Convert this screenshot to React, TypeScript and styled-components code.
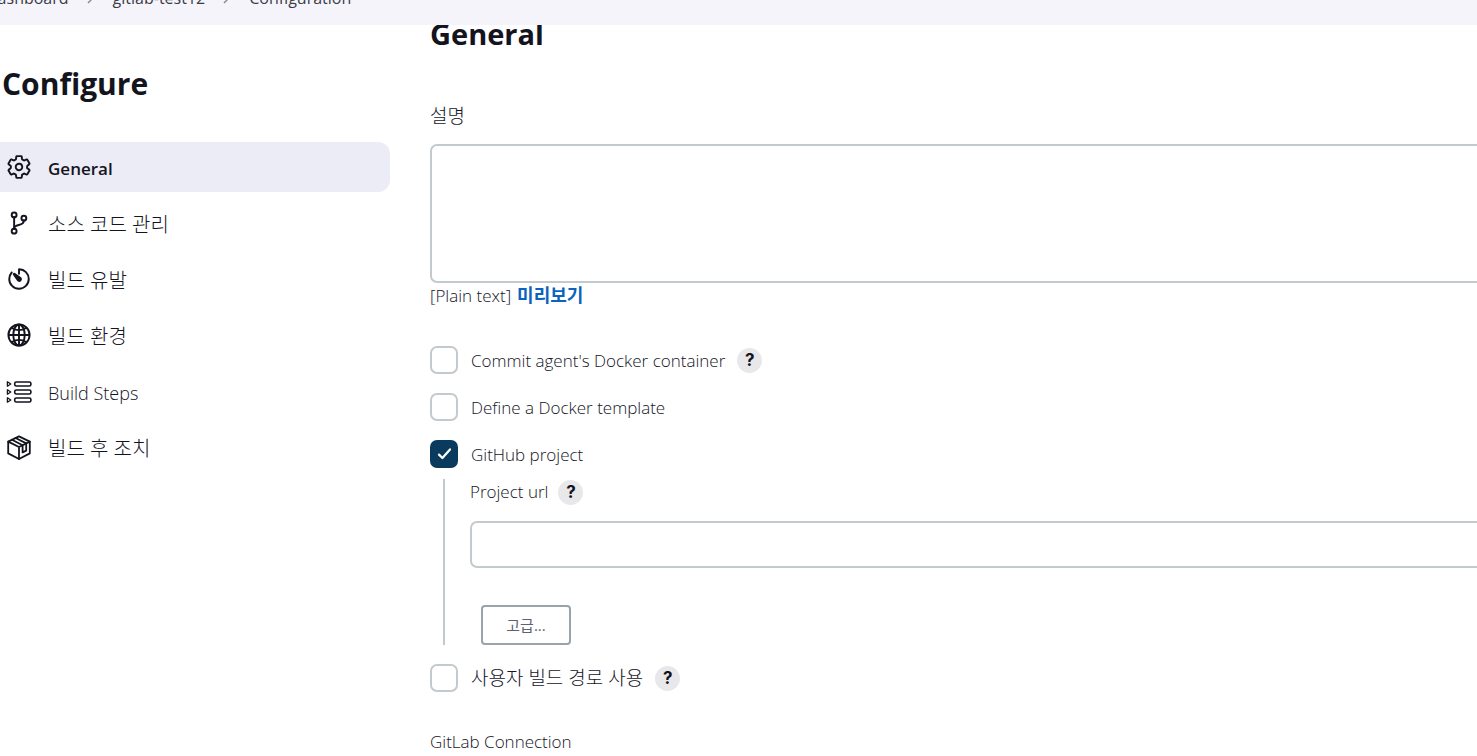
import React, { useState } from 'react';
import styled, { createGlobalStyle, css } from 'styled-components';
import {
  IoSettingsOutline,
  IoGitBranchOutline,
  IoTimerOutline,
  IoGlobeOutline,
} from 'react-icons/io5';

const GlobalStyle = createGlobalStyle`
  *, *::before, *::after { box-sizing: border-box; }
  body {
    margin: 0;
    background: #ffffff;
    color: #14141f;
    font-family: "Open Sans", "Noto Sans CJK KR", sans-serif;
    font-size: 17px;
    font-weight: 300;
    line-height: 24px;
  }
`;

const Page = styled.div`
  min-height: 100vh;
  overflow: hidden;
`;

const TopBar = styled.header`
  position: relative;
  z-index: 1;
  display: flex;
  align-items: flex-end;
  height: 25px;
  padding-bottom: 15px;
  overflow: hidden;
  background: #f5f4fa;
`;

const Crumbs = styled.nav`
  display: flex;
  align-items: center;
  gap: 16px;
  margin-left: -14px;
  color: #3c3c48;
  font-size: 16px;
  white-space: nowrap;
`;

const Crumb = styled.a`
  color: inherit;
  font-weight: 400;
  text-decoration: none;
`;

const Layout = styled.div`
  display: grid;
  grid-template-columns: 390px minmax(0, 1fr);
  column-gap: 40px;
`;

const Sidebar = styled.aside`
  padding-top: 39px;
`;

const Title = styled.h1`
  margin: 0 0 38px 2px;
  font-size: 30px;
  font-weight: 700;
  line-height: 40px;
`;

const Menu = styled.nav`
  display: flex;
  flex-direction: column;
  gap: 6px;
`;

const MenuItem = styled.a<{ $active?: boolean }>`
  display: flex;
  align-items: center;
  gap: 16px;
  height: 50px;
  padding-left: 6px;
  border-radius: 0 12px 12px 0;
  color: inherit;
  font-size: 18px;
  text-decoration: none;
  ${(p) =>
    p.$active &&
    css`
      background: #ececf6;
      font-size: 17px;
      font-weight: 600;
    `}

  svg {
    flex: none;
    width: 26px;
    height: 26px;
  }

  svg[viewBox="0 0 512 512"] * {
    stroke-width: 38px;
  }
`;

const MenuLabel = styled.span<{ $korean?: boolean }>`
  padding-top: 3px;
  font-size: ${(p) => (p.$korean ? '20px' : 'inherit')};
`;

const Korean = styled.span`
  font-size: 19px;
`;

const Main = styled.main`
  display: flex;
  flex-direction: column;
  align-items: stretch;
  margin-right: -16px;
`;

const SectionTitle = styled.h2`
  margin: -11px 0 50px;
  font-size: 29px;
  font-weight: 700;
  line-height: 40px;
`;

const FieldLabel = styled.label`
  line-height: 24px;
`;

const TextArea = styled.textarea`
  display: block;
  width: 100%;
  height: 139px;
  margin-top: 15px;
  padding: 8px;
  border: 2px solid #c3cace;
  border-radius: 7px;
  background: #ffffff;
  font: inherit;
  resize: none;
`;

const TextInput = styled.input`
  display: block;
  width: 100%;
  height: 47px;
  margin-top: 16px;
  padding: 8px;
  border: 2px solid #c3cace;
  border-radius: 7px;
  background: #ffffff;
  font: inherit;
`;

const Hint = styled.div`
  display: flex;
  gap: 6px;
  margin-bottom: 38px;
  line-height: 25px;
`;

const PreviewLink = styled.a`
  color: #0b63bd;
  font-size: 18px;
  font-weight: 700;
  text-decoration: none;
`;

const Options = styled.div`
  display: flex;
  flex-direction: column;
  gap: 19px;
`;

const Option = styled.div`
  display: flex;
  align-items: center;
  gap: 12px;
  height: 28px;
`;

const CheckLabel = styled.label`
  display: flex;
  align-items: center;
  gap: 13px;
`;

const CheckText = styled.span`
  padding-top: 2px;
`;

const CheckBox = styled.span`
  display: grid;
  width: 28px;
  height: 28px;

  input,
  svg {
    grid-area: 1 / 1;
    width: 28px;
    height: 28px;
    margin: 0;
  }

  input {
    appearance: none;
    border: 2px solid #c3cace;
    border-radius: 7px;
    background: #ffffff;
  }

  input:checked {
    border-color: #0a3b5e;
    background: #0a3b5e;
  }

  svg {
    pointer-events: none;
  }
`;

const HelpButton = styled.button`
  display: grid;
  place-items: center;
  width: 25px;
  height: 25px;
  padding: 0;
  border: 0;
  border-radius: 50%;
  background: #e8e8ea;
  color: #14141f;
  font: 700 17px/24px Inter, sans-serif;
`;

const Nested = styled.div`
  display: flex;
  flex-direction: column;
  align-items: flex-start;
  margin: 11px 0 19px 13px;
  padding-left: 25px;
  border-left: 2px solid #c3cace;
`;

const NestedRow = styled.div`
  display: flex;
  align-items: center;
  gap: 10px;
  height: 26px;
`;

const AdvancedButton = styled.button`
  width: 90px;
  height: 40px;
  margin: 37px 0 0 11px;
  border: 2px solid #98a4aa;
  border-radius: 4px;
  background: #ffffff;
  color: #5f5f78;
  font: 400 15px/20px "Open Sans", "Noto Sans CJK KR", sans-serif;
`;

const Footer = styled.div`
  margin-top: 38px;
`;

function Chevron() {
  return (
    <svg width="12" height="12" viewBox="0 0 12 12" fill="none" stroke="#85858f" strokeWidth="1.4" aria-hidden>
      <path d="M3 1l5 5-5 5" />
    </svg>
  );
}

function StepsIcon() {
  return (
    <svg viewBox="0 0 26 26" fill="none" stroke="currentColor" strokeWidth="1.6" strokeLinejoin="round" aria-hidden>
      {[6, 14, 22].map((y) => (
        <g key={y}>
          <path d={`M1.4 ${y - 2.2}v4.4l3.4-2.2z`} strokeWidth="1.3" />
          <rect x="8.7" y={y - 2} width="16.2" height="4" rx="1.6" />
        </g>
      ))}
    </svg>
  );
}

function PackageIcon() {
  return (
    <svg viewBox="0 0 26 26" fill="none" stroke="currentColor" strokeWidth="1.8" strokeLinejoin="round" strokeLinecap="round" aria-hidden>
      <path d="M13 2.4L2.2 7.6v11.8L13 25l10.8-5.6V7.6z" />
      <path d="M2.2 7.6L13 13l10.8-5.4M13 13v12" />
      <path d="M6 5.8L16.6 11.2v7.2l3.6-1.8V9.4L9.6 4" />
    </svg>
  );
}

function Help({ topic }: { topic: string }) {
  return (
    <HelpButton type="button" aria-label={`Help: ${topic}`}>
      ?
    </HelpButton>
  );
}

function Check({ label, korean, help, checked, onChange }: {
  label: string;
  korean?: boolean;
  help?: boolean;
  checked: boolean;
  onChange: () => void;
}) {
  return (
    <Option>
      <CheckLabel>
        <CheckBox>
          <input type="checkbox" checked={checked} onChange={onChange} />
          {checked && (
            <svg viewBox="0 0 28 28" fill="none" stroke="#ffffff" strokeWidth="2.2" strokeLinecap="round" strokeLinejoin="round" aria-hidden>
              <path d="M9 14.6l3.4 3.4L20 9.4" />
            </svg>
          )}
        </CheckBox>
        {korean ? <Korean>{label}</Korean> : <CheckText>{label}</CheckText>}
      </CheckLabel>
      {help && <Help topic={label} />}
    </Option>
  );
}

const menu = [
  { label: 'General', icon: <IoSettingsOutline />, active: true },
  { label: '소스 코드 관리', icon: <IoGitBranchOutline />, korean: true },
  { label: '빌드 유발', icon: <IoTimerOutline />, korean: true },
  { label: '빌드 환경', icon: <IoGlobeOutline />, korean: true },
  { label: 'Build Steps', icon: <StepsIcon /> },
  { label: '빌드 후 조치', icon: <PackageIcon />, korean: true },
];

export default function App() {
  const [on, setOn] = useState({ commit: false, template: false, github: true, path: false });
  const flip = (key: keyof typeof on) => () => setOn({ ...on, [key]: !on[key] });

  return (
    <Page>
      <GlobalStyle />
      <TopBar>
        <Crumbs aria-label="Breadcrumb">
          <Crumb href="#dashboard">Dashboard</Crumb>
          <Chevron />
          <Crumb href="#job">gitlab-test12</Crumb>
          <Chevron />
          <Crumb href="#configuration">Configuration</Crumb>
        </Crumbs>
      </TopBar>
      <Layout>
        <Sidebar>
          <Title>Configure</Title>
          <Menu aria-label="Sections">
            {menu.map((m) => (
              <MenuItem key={m.label} href="#section" $active={m.active}>
                {m.icon}
                <MenuLabel $korean={m.korean}>{m.label}</MenuLabel>
              </MenuItem>
            ))}
          </Menu>
        </Sidebar>
        <Main>
          <SectionTitle>General</SectionTitle>
          <FieldLabel htmlFor="description">
            <Korean>설명</Korean>
          </FieldLabel>
          <TextArea id="description" />
          <Hint>
            <span>[Plain text]</span>
            <PreviewLink href="#preview">미리보기</PreviewLink>
          </Hint>
          <Options>
            <Check label="Commit agent's Docker container" help checked={on.commit} onChange={flip('commit')} />
            <Check label="Define a Docker template" checked={on.template} onChange={flip('template')} />
            <Check label="GitHub project" checked={on.github} onChange={flip('github')} />
          </Options>
          <Nested>
            <NestedRow>
              <FieldLabel htmlFor="project-url">Project url</FieldLabel>
              <Help topic="Project url" />
            </NestedRow>
            <TextInput id="project-url" type="text" />
            <AdvancedButton type="button">고급...</AdvancedButton>
          </Nested>
          <Check label="사용자 빌드 경로 사용" korean help checked={on.path} onChange={flip('path')} />
          <Footer>GitLab Connection</Footer>
        </Main>
      </Layout>
    </Page>
  );
}
